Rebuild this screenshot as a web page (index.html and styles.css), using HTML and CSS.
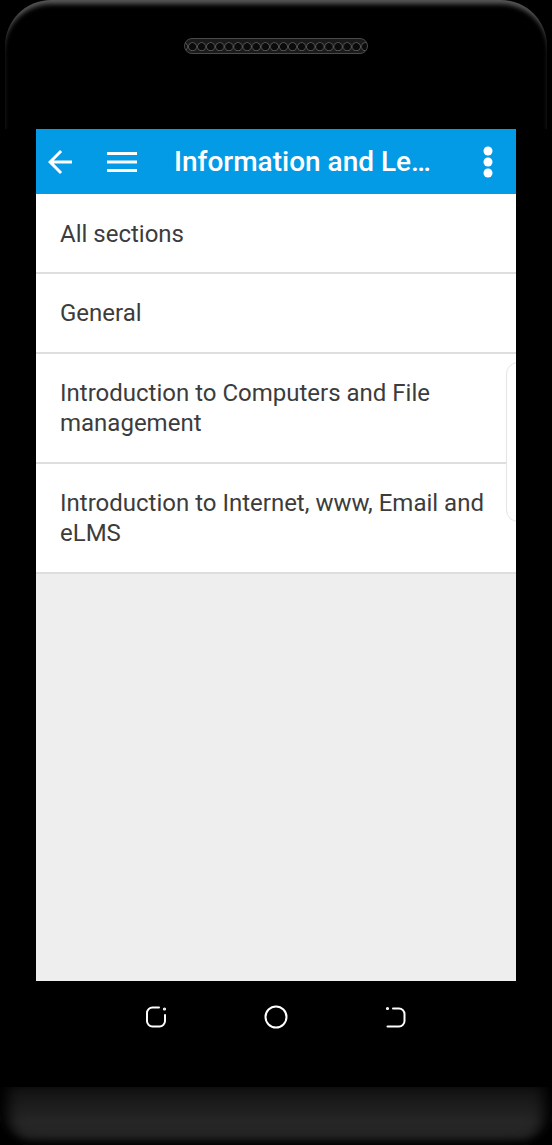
FILE: index.html
```html
<!DOCTYPE html>
<html lang="en">
<head>
  <meta charset="UTF-8">
  <title>Information and Learning</title>
  <link rel="stylesheet" href="styles.css">
</head>
<body>

  <div class="phone">
    <div class="bezel-top">
      <div class="speaker"></div>
    </div>

    <div class="screen">
      <header class="appbar">
        <button class="icon-btn back">
          <svg width="36" height="36" viewBox="0 0 24 24"><path fill="#fff" d="M20 11H7.83l5.59-5.59L12 4l-8 8 8 8 1.41-1.41L7.83 13H20v-2z"/></svg>
        </button>
        <button class="icon-btn menu">
          <svg width="30" height="22" viewBox="0 0 30 22"><rect x="0" y="1" width="30" height="3" fill="#fff"/><rect x="0" y="9.5" width="30" height="3" fill="#fff"/><rect x="0" y="18" width="30" height="3" fill="#fff"/></svg>
        </button>
        <h1 class="title">Information and Le…</h1>
        <button class="icon-btn more">
          <svg width="10" height="32" viewBox="0 0 10 32"><circle cx="5" cy="5" r="4.5" fill="#fff"/><circle cx="5" cy="16" r="4.5" fill="#fff"/><circle cx="5" cy="27" r="4.5" fill="#fff"/></svg>
        </button>
      </header>

      <ul class="sections">
        <li>All sections</li>
        <li>General</li>
        <li>Introduction to Computers and File management</li>
        <li>Introduction to Internet, www, Email and eLMS</li>
      </ul>

      <div class="peek"></div>
    </div>

    <nav class="softkeys">
      <svg width="24" height="24" viewBox="0 0 24 24" fill="none" stroke="#fff" stroke-width="2" stroke-linecap="round">
        <path d="M15 2.5H8.5A5.5 5.5 0 0 0 3 8V16A5.5 5.5 0 0 0 8.5 21.5H15.5A5.5 5.5 0 0 0 21 16V10"/>
        <circle cx="20.5" cy="4" r="0.6" fill="#fff"/>
      </svg>
      <svg width="24" height="24" viewBox="0 0 24 24" fill="none" stroke="#fff" stroke-width="2">
        <circle cx="12" cy="12" r="10.5"/>
      </svg>
      <svg width="24" height="24" viewBox="0 0 24 24" fill="none" stroke="#fff" stroke-width="2" stroke-linecap="round">
        <path d="M9 3.5H15A5.5 5.5 0 0 1 20.5 9V16A5.5 5.5 0 0 1 15 21.5H3.5"/>
        <circle cx="3.5" cy="3.5" r="0.6" fill="#fff"/>
      </svg>
    </nav>

    <div class="chin"></div>
  </div>

</body>
</html>
```

FILE: styles.css
```css
body {
  margin: 0;
  background: #000;
  font-family: Roboto, "Noto Sans", Arial, sans-serif;
}

.phone {
  width: 552px;
  height: 1145px;
  overflow: hidden;
}

.bezel-top {
  height: 129px;
  margin: 0 5px;
  border-radius: 46px 46px 0 0;
  box-shadow: inset 0 6px 5px -2px #5a5a5a;
  padding-top: 38px;
  box-sizing: border-box;
}

.speaker {
  width: 184px;
  height: 16px;
  margin: 0 auto;
  border-radius: 8px;
  border: 1px solid #4a4a4a;
  box-sizing: border-box;
  background-color: #111;
  background-image: radial-gradient(circle at 50% 55%, #0b0b0b 3.3px, #5c5c5c 4px, #1a1a1a 4.8px);
  background-size: 9.1px 100%;
  background-position: 3px 0;
}

.screen {
  position: relative;
  width: 480px;
  height: 852px;
  margin-left: 36px;
  background: #eeeeee;
  overflow: hidden;
}

.appbar {
  display: flex;
  align-items: center;
  height: 65px;
  background: #039be5;
}

.icon-btn {
  display: flex;
  align-items: center;
  justify-content: center;
  width: 48px;
  height: 48px;
  padding: 0;
  border: none;
  background: none;
}

.menu {
  margin-left: 14px;
}

.title {
  flex: 1;
  margin: 0 0 0 28px;
  color: #fff;
  font-size: 28px;
  font-weight: 500;
  white-space: nowrap;
}

.more {
  margin-right: 4px;
}

.sections {
  list-style: none;
  margin: 0;
  padding: 0;
  background: #fff;
}

.sections li {
  padding: 24px;
  line-height: 30px;
  font-size: 24px;
  color: #3c3c3c;
  border-bottom: 2px solid #dedede;
}

.sections li:first-child {
  padding-top: 25px;
  padding-bottom: 23px;
}

.peek {
  position: absolute;
  left: 470px;
  top: 233px;
  width: 40px;
  height: 158px;
  border: 1px solid #e4e4e4;
  border-radius: 12px;
  background: #fff;
}

.softkeys {
  display: flex;
  justify-content: center;
  gap: 96px;
  height: 106px;
  padding-top: 24px;
  box-sizing: border-box;
}

.chin {
  height: 58px;
  border-radius: 0 0 30px 30px;
  background: linear-gradient(#121212, #262626 60%, #232323);
  box-shadow: inset 16px 0 14px -8px #000, inset -16px 0 14px -8px #000, inset 0 -8px 8px -4px #000;
}
```
